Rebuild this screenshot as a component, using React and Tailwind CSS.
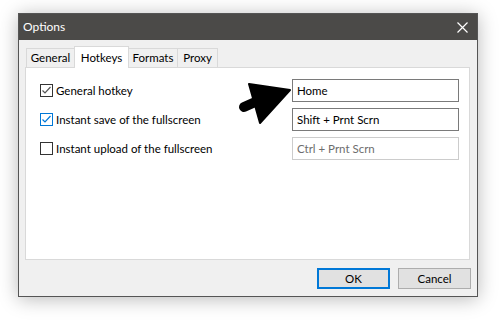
import React from "react";

const tabs = [
  { name: "General", w: "w-[49px]" },
  { name: "Hotkeys", w: "w-[55px]" },
  { name: "Formats", w: "w-[50px]" },
  { name: "Proxy", w: "w-[41px]" },
];

const rows = [
  { label: "General hotkey", value: "Home", state: "checked" },
  { label: "Instant save of the fullscreen", value: "Shift + Prnt Scrn", state: "focus" },
  { label: "Instant upload of the fullscreen", value: "Ctrl + Prnt Scrn", state: "off" },
];

const Check = ({ state }) => {
  const border = state === "focus" ? "border-[#0078d7]" : "border-[#333333]";
  return (
    <div className={`w-[13px] h-[13px] border ${border} bg-white flex items-center justify-center`}>
      {state !== "off" && (
        <svg width="11" height="11" viewBox="0 0 11 11">
          <path
            d="M1.5 5.5 L4 8 L9.5 2"
            fill="none"
            stroke={state === "focus" ? "#0078d7" : "#555555"}
            strokeWidth="1.2"
          />
        </svg>
      )}
    </div>
  );
};

export default function App() {
  return (
    <div
      className="relative w-[503px] h-[320px] bg-white overflow-hidden pt-[13px] pl-[18px]"
      style={{ fontFamily: 'Lato, "Segoe UI", sans-serif' }}
    >
      <div className="w-[460px] h-[284px] border border-[#555555] bg-[#f0f0f0] flex flex-col shadow-[0_2px_18px_rgba(0,0,0,0.28)]">
        {/* Title bar */}
        <div className="h-[26px] bg-[#4b4a48] flex items-center justify-between pl-[4px] pr-[9px] text-white text-[12px]">
          <span>Options</span>
          <svg width="11" height="11" viewBox="0 0 11 11">
            <path d="M0.5 0.5 L10.5 10.5 M10.5 0.5 L0.5 10.5" stroke="#ffffff" strokeWidth="1.2" />
          </svg>
        </div>

        {/* Tabs */}
        <div className="pt-[6px] pl-[6px] pr-[7px] flex flex-col">
          <div className="flex items-end pl-[1px] h-[21px] text-[11.5px] text-black">
            {tabs.map((t, i) =>
              t.name === "Hotkeys" ? (
                <div
                  key={t.name}
                  className={`${t.w} -ml-[1px] h-[22px] -mb-[1px] relative z-10 bg-white border border-b-0 border-[#d9d9d9] flex justify-center items-start pt-[2px]`}
                >
                  {t.name}
                </div>
              ) : (
                <div
                  key={t.name}
                  className={`${t.w} ${i === 0 ? "" : "-ml-[1px]"} h-[19px] bg-[#f0f0f0] border border-b-0 border-[#d9d9d9] flex justify-center items-center`}
                >
                  {t.name}
                </div>
              )
            )}
          </div>

          {/* Panel */}
          <div className="h-[193px] bg-white border border-[#d9d9d9] pt-[11px] pl-[14px] pr-[10px] flex flex-col gap-[6px] text-[11.5px]">
            {rows.map((r) => (
              <div key={r.label} className="h-[23px] flex items-center justify-between">
                <div className="flex items-center gap-[3px] text-black">
                  <Check state={r.state} />
                  <span>{r.label}</span>
                </div>
                <div
                  className={`w-[167px] h-[23px] border px-[4px] flex items-center ${
                    r.state === "off"
                      ? "border-[#cccccc] text-[#6d6d6d]"
                      : "border-[#7a7a7a] text-black"
                  }`}
                >
                  {r.value}
                </div>
              </div>
            ))}
          </div>
        </div>

        {/* Buttons */}
        <div className="flex justify-end gap-[8px] pt-[8px] pr-[6px] text-[11.5px] text-black">
          <button className="w-[73px] h-[21px] bg-[#e1e1e1] border-2 border-[#0078d7] flex items-center justify-center">
            OK
          </button>
          <button className="w-[73px] h-[21px] bg-[#e1e1e1] border border-[#adadad] flex items-center justify-center">
            Cancel
          </button>
        </div>
      </div>

      {/* Mouse cursor overlay */}
      <svg className="absolute left-0 top-0" width="503" height="320" viewBox="0 0 503 320">
        <path d="M262 99 L244 107" stroke="#000" strokeWidth="10" strokeLinecap="round" />
        <path d="M290 90 L249 84 L260 123 Z" fill="#000" stroke="#000" strokeWidth="2" strokeLinejoin="round" />
      </svg>
    </div>
  );
}
